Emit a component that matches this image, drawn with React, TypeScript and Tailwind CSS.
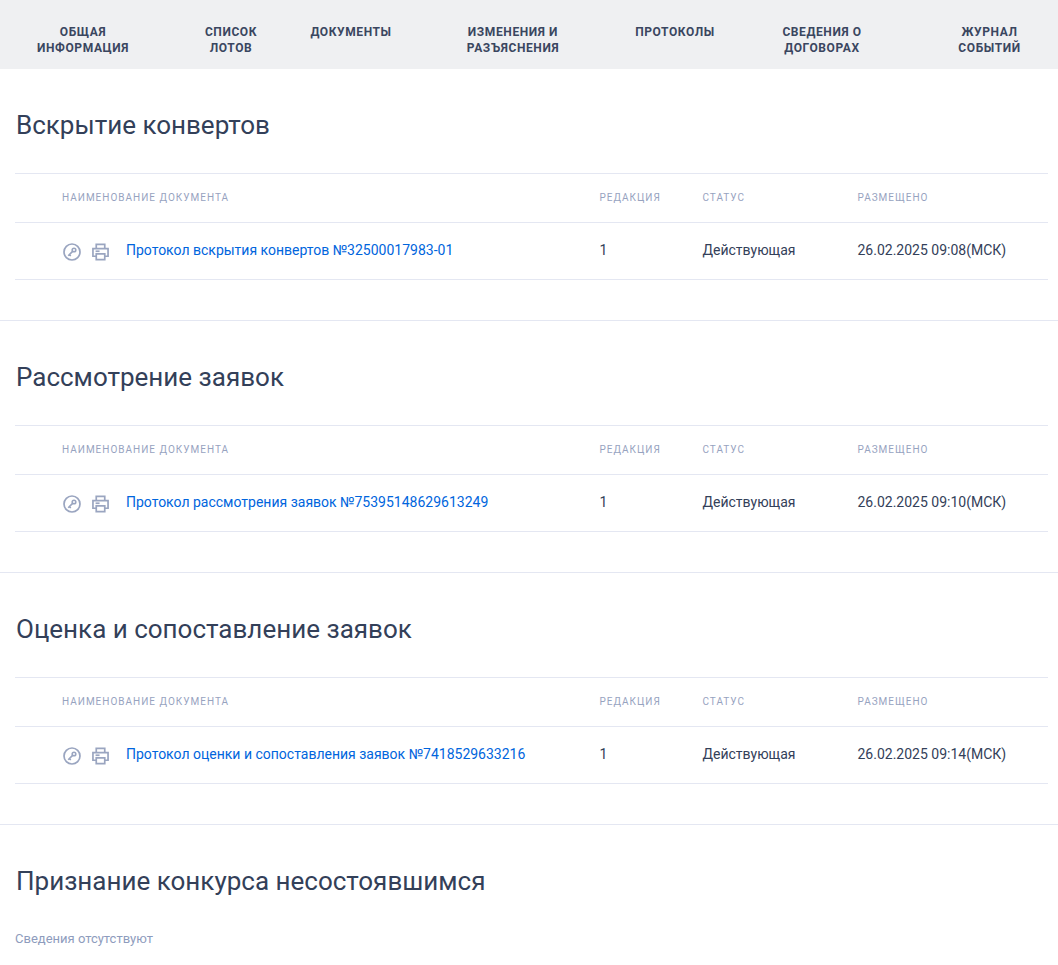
const navItems = [
  { label: ["ОБЩАЯ", "ИНФОРМАЦИЯ"], width: "w-[166px]" },
  { label: ["СПИСОК", "ЛОТОВ"], width: "w-[130px]" },
  { label: ["ДОКУМЕНТЫ"], width: "w-[110px]" },
  { label: ["ИЗМЕНЕНИЯ И", "РАЗЪЯСНЕНИЯ"], width: "w-[214px]" },
  { label: ["ПРОТОКОЛЫ"], width: "w-[110px]" },
  { label: ["СВЕДЕНИЯ О", "ДОГОВОРАХ"], width: "w-[184px]" },
  { label: ["ЖУРНАЛ", "СОБЫТИЙ"], width: "w-[144px] pl-[7px]" },
];

const sections = [
  {
    title: "Вскрытие конвертов",
    doc: "Протокол вскрытия конвертов №32500017983-01",
    date: "26.02.2025 09:08(МСК)",
  },
  {
    title: "Рассмотрение заявок",
    doc: "Протокол рассмотрения заявок №75395148629613249",
    date: "26.02.2025 09:10(МСК)",
  },
  {
    title: "Оценка и сопоставление заявок",
    doc: "Протокол оценки и сопоставления заявок №7418529633216",
    date: "26.02.2025 09:14(МСК)",
  },
];

function KeyIcon() {
  return (
    <svg width="18" height="18" viewBox="0 0 18 18" fill="none" stroke="#9aa5c0" strokeWidth="1.7">
      <circle cx="9" cy="9" r="8" />
      <circle cx="11" cy="7" r="1.8" strokeWidth="1.6" />
      <path d="M9.6 8.4 L5.2 12.8 M6.4 11.6 L7.8 13" strokeWidth="1.6" />
    </svg>
  );
}

function PrintIcon() {
  return (
    <svg width="17" height="18" viewBox="0 0 18 18" fill="none" stroke="#9aa5c0" strokeWidth="1.8">
      <path d="M4.5 5.5 V1 H13.5 V5.5" />
      <path d="M4.5 13.5 H1 V5.5 H17 V13.5 H13.5" />
      <path d="M4.5 11 H13.5 V17 H4.5 Z" />
      <path d="M3.8 8.2 H8" />
    </svg>
  );
}

function DocTable({ doc, date }: { doc: string; date: string }) {
  return (
    <div className="mx-[15px] w-[1033px] border-t border-[#e4e7f2]">
      <div className="grid h-[49px] grid-cols-[47px_537.5px_103px_155px_1fr] items-center border-b border-[#e4e7f2] pb-[1px] text-[10px] font-normal tracking-[1px] text-[#97a3bf]">
        <span />
        <span>НАИМЕНОВАНИЕ ДОКУМЕНТА</span>
        <span>РЕДАКЦИЯ</span>
        <span>СТАТУС</span>
        <span>РАЗМЕЩЕНО</span>
      </div>
      <div className="grid h-[57px] grid-cols-[47px_537.5px_103px_155px_1fr] items-center border-b border-[#e4e7f2] pb-[2px] text-sm text-[#334059]">
        <span />
        <div className="flex items-center">
          <span className="ml-[1px] flex w-[29px] pt-[3px]"><KeyIcon /></span>
          <span className="flex w-[34px] pt-[3px]"><PrintIcon /></span>
          <a className="text-[#0065dd]" href="#">{doc}</a>
        </div>
        <span>1</span>
        <span>Действующая</span>
        <span>{date}</span>
      </div>
    </div>
  );
}

export default function App() {
  return (
    <div className="min-h-[965px] overflow-hidden bg-white font-['Roboto',sans-serif]">
      <nav className="flex h-[69px] bg-[#eff0f2]">
        {navItems.map((item) => (
          <div
            key={item.label[0]}
            className={`${item.width} shrink-0 pt-[24px] text-center text-xs leading-4 font-bold tracking-[0.6px] text-[#3a4660]`}
          >
            {item.label.map((line) => (
              <div key={line}>{line}</div>
            ))}
          </div>
        ))}
      </nav>

      {sections.map((s) => (
        <section key={s.title} className="h-[252px] border-b border-[#e4e7f2]">
          <h2 className="pt-[39px] pb-[31px] pl-4 text-[26px] leading-[34px] text-[#334059]">{s.title}</h2>
          <DocTable doc={s.doc} date={s.date} />
        </section>
      ))}

      <section>
        <h2 className="pt-[39px] pl-4 text-[26px] leading-[34px] text-[#334059]">Признание конкурса несостоявшимся</h2>
        <p className="pt-[31px] pl-[15px] text-[13px] text-[#8e9cbd]">Сведения отсутствуют</p>
      </section>
    </div>
  );
}
